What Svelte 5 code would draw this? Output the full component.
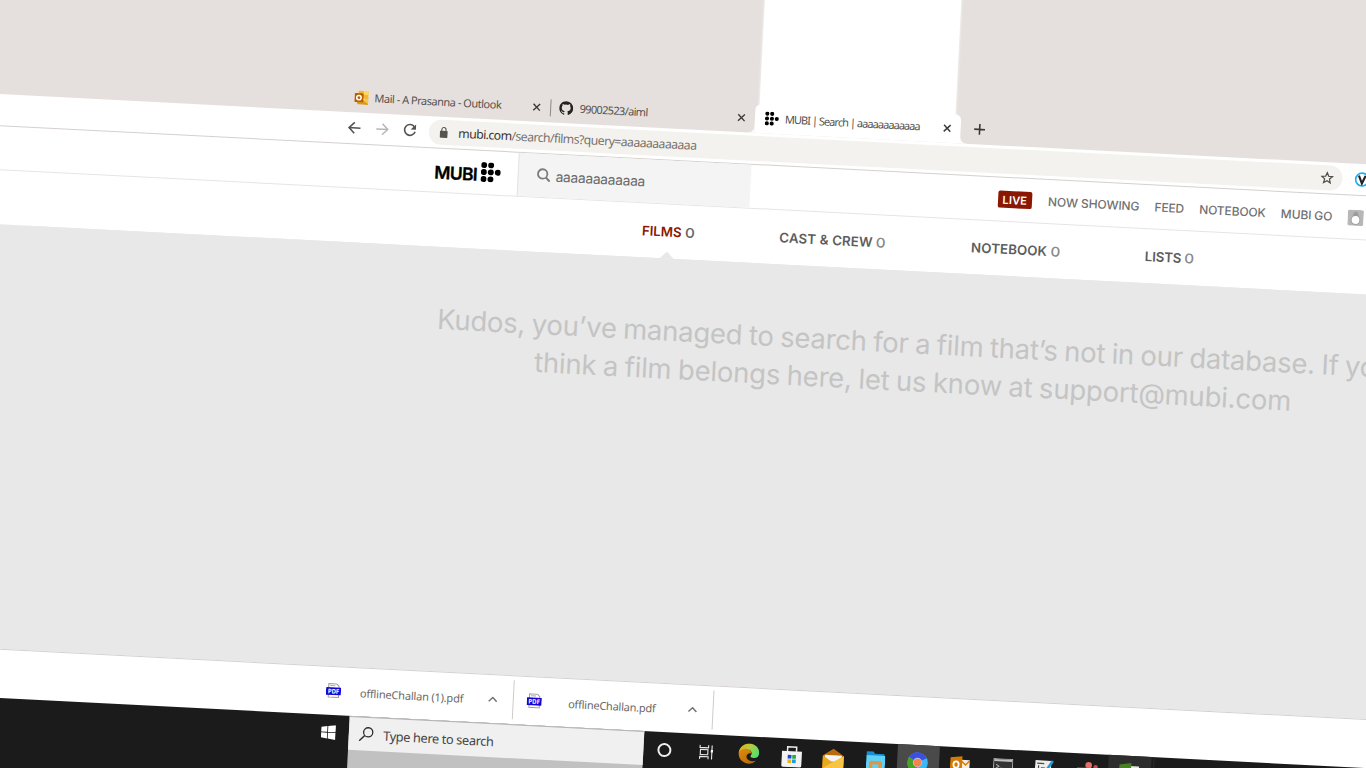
<script>
  // Spreads the letters so that the text takes up the given width.
  function fit(node, width) {
    const natural = parseFloat(getComputedStyle(node).width);
    const count = node.textContent.length;
    node.style.letterSpacing = (width - natural) / count + 'px';
  }

  const tabs = [
    { icon: 'outlook', title: 'Mail - A Prasanna - Outlook', width: 127 },
    { icon: 'github', title: '99002523/aiml', width: 68 },
    { icon: 'mubi', title: 'MUBI | Search | aaaaaaaaaaaa', width: 135, active: true }
  ];
  const links = [
    { label: 'NOW SHOWING', width: 91.5 },
    { label: 'FEED', width: 29.5 },
    { label: 'NOTEBOOK', width: 66.5 },
    { label: 'MUBI GO', width: 51.5 }
  ];
  const sections = [
    { label: 'FILMS', width: 39.5, space: 86, active: true },
    { label: 'CAST & CREW', width: 93.5, space: 86.5 },
    { label: 'NOTEBOOK', width: 76, space: 86 },
    { label: 'LISTS', width: 36.5, space: 0 }
  ];
  const downloads = [
    { name: 'offlineChallan (1).pdf', width: 103.5 },
    { name: 'offlineChallan.pdf', width: 87.5 }
  ];
</script>

{#snippet dots(size)}
  <svg width={size} height={size} viewBox="0 0 20 20">
    {#each [[3, 3], [10, 3], [3, 10], [10, 10], [17, 10], [3, 17], [10, 17]] as [x, y]}
      <circle cx={x} cy={y} r="2.95" fill="#000" />
    {/each}
  </svg>
{/snippet}

<div class="viewport">
  <div class="stage">
    <div class="tabstrip">
      {#each tabs as tab}
        <div class="tab {tab.icon}" class:active={tab.active}>
          {#if tab.icon === 'outlook'}
            <svg width="14" height="14" viewBox="0 0 14 14">
              <path d="M4 0h9.5q.5 0 .5.5V8H4z" fill="#f2b632" />
              <path d="M9 0h5v4H9z" fill="#ffd95c" />
              <path d="M3 6l6 4 5-3.5V13q0 1-1 1H4q-1 0-1-1z" fill="#dc9a17" />
              <path d="M9 10l5-3.5V13z" fill="#f8c64a" />
              <rect x="0" y="2.6" width="9" height="9" rx="1" fill="#b85f00" />
              <circle cx="4.5" cy="7.1" r="2.2" fill="none" stroke="#fff" stroke-width="1.5" />
            </svg>
          {:else if tab.icon === 'github'}
            <svg width="14" height="14" viewBox="0 0 16 16">
              <path fill="#24211f" d="M8 0C3.58 0 0 3.58 0 8c0 3.54 2.29 6.53 5.47 7.59.4.07.55-.17.55-.38 0-.19-.01-.82-.01-1.49-2.01.37-2.53-.49-2.69-.94-.09-.23-.48-.94-.82-1.13-.28-.15-.68-.52-.01-.53.63-.01 1.08.58 1.23.82.72 1.21 1.87.87 2.33.66.07-.52.28-.87.51-1.07-1.78-.2-3.64-.89-3.64-3.95 0-.87.31-1.59.82-2.15-.08-.2-.36-1.02.08-2.12 0 0 .67-.21 2.2.82a7.6 7.6 0 0 1 4 0c1.53-1.04 2.2-.82 2.2-.82.44 1.1.16 1.92.08 2.12.51.56.82 1.27.82 2.15 0 3.07-1.87 3.75-3.65 3.95.29.25.54.73.54 1.48 0 1.07-.01 1.93-.01 2.2 0 .21.15.46.55.38A8.01 8.01 0 0 0 16 8c0-4.42-3.58-8-8-8z" />
            </svg>
          {:else}
            {@render dots(14)}
          {/if}
          <span class="title" use:fit={tab.width}>{tab.title}</span>
          <svg class="close" width="9" height="9" viewBox="0 0 9 9">
            <path d="M1.2 1.2l6.6 6.6M7.8 1.2L1.2 7.8" stroke="#3c3835" stroke-width="1.4" />
          </svg>
        </div>
      {/each}
      <svg class="plus" width="12" height="12" viewBox="0 0 12 12">
        <path d="M6 .6v10.8M.6 6h10.8" stroke="#3c3835" stroke-width="1.6" />
      </svg>
    </div>

    <div class="toolbar">
      <svg width="13" height="13" viewBox="0 0 13 13"><path d="M12.6 6.5H1.2M6.6 1L1.1 6.5 6.6 12" fill="none" stroke="#55514e" stroke-width="1.5" /></svg>
      <svg class="forward" width="13" height="13" viewBox="0 0 13 13"><path d="M.4 6.5h11.4M6.4 1l5.5 5.5L6.4 12" fill="none" stroke="#bab6b3" stroke-width="1.5" /></svg>
      <svg class="reload" width="14" height="14" viewBox="0 0 14 14">
        <path d="M11.6 3.7A5.4 5.4 0 1 0 12.3 8.2" fill="none" stroke="#55514e" stroke-width="1.6" />
        <path d="M13 .9v5.3H7.7z" fill="#55514e" />
      </svg>
      <div class="address">
        <svg width="8" height="11" viewBox="0 0 8 11">
          <rect x="0" y="4" width="8" height="7" rx=".9" fill="#57534f" />
          <path d="M1.9 4.3V2.7a2.1 2.1 0 0 1 4.2 0v1.6" fill="none" stroke="#57534f" stroke-width="1.1" />
        </svg>
        <span class="url" use:fit={238.5}><b>mubi.com</b>/search/films?query=aaaaaaaaaaaa</span>
        <svg class="star" width="13" height="13" viewBox="0 0 13 13">
          <path d="M6.5 1.3l1.5 3.6 3.9.3-3 2.5.95 3.8L6.5 9.4l-3.35 2.1.95-3.8-3-2.5 3.9-.3z" fill="none" stroke="#4f4b48" stroke-width="1.2" />
        </svg>
      </div>
      <svg class="extension" width="15" height="15" viewBox="0 0 15 15">
        <circle cx="7.5" cy="7.5" r="6.4" fill="#fff" stroke="#1cb0ee" stroke-width="1.7" />
        <path d="M4.2 3.6l3.3 7.8 3.3-7.8" fill="none" stroke="#222" stroke-width="2.1" />
      </svg>
    </div>

    <header>
      <span class="brand" use:fit={43}>MUBI</span>
      <span class="mark">{@render dots(20)}</span>
      <div class="search">
        <svg width="14" height="14" viewBox="0 0 14 14">
          <circle cx="5.9" cy="5.9" r="4.7" fill="none" stroke="#7b7b7b" stroke-width="1.8" />
          <path d="M9.3 9.3l3.9 3.9" stroke="#7b7b7b" stroke-width="2" />
        </svg>
        <span use:fit={89.5}>aaaaaaaaaaaa</span>
      </div>
      <div class="live"><span use:fit={24.5}>LIVE</span></div>
      <nav>
        {#each links as link}
          <span use:fit={link.width}>{link.label}</span>
        {/each}
      </nav>
      <svg class="avatar" width="16" height="16" viewBox="0 0 16 16">
        <rect width="16" height="16" rx="2" fill="#b7b7b7" />
        <path d="M8 2c2 0 2.3 1.8 2.8 3.5.6 1.7 2 2.7 2 5A4.5 4.5 0 0 1 8 15a4.5 4.5 0 0 1-4.8-4.5c0-2.3 1.4-3.3 2-5C5.7 3.8 6 2 8 2z" fill="#9c9c9c" />
        <ellipse cx="8" cy="10.2" rx="3.9" ry="4" fill="#fff" />
      </svg>
    </header>

    <div class="sections">
      {#each sections as s}
        <div class="section" class:chosen={s.active} style:margin-right="{s.space}px">
          <span use:fit={s.width}>{s.label}</span><i>0</i>
        </div>
      {/each}
    </div>

    <main>
      <p><span use:fit={956}>Kudos, you’ve managed to search for a film that’s not in our database. If you</span></p>
      <p><span use:fit={758}>think a film belongs here, let us know at support@mubi.com</span></p>
    </main>

    <div class="shelf">
      {#each downloads as d}
        <div class="download">
          <svg width="15" height="15" viewBox="0 0 15 15">
            <path d="M2.5 5V.7h8l2.3 2.3V5M2.5 11v3.3h10.3V11" fill="#fff" stroke="#999" stroke-width="1" />
            <path d="M4 2.6h5" stroke="#aaa" />
            <rect x="0" y="4.3" width="15" height="7.7" rx=".5" fill="#1703d2" />
            <text x="7.5" y="10.5" text-anchor="middle" textLength="11.5" lengthAdjust="spacingAndGlyphs" font-size="6.4">PDF</text>
          </svg>
          <div class="file"><span use:fit={d.width}>{d.name}</span></div>
          <svg class="chevron" width="10" height="6" viewBox="0 0 10 6"><path d="M1 5.3l4-4 4 4" fill="none" stroke="#77726f" stroke-width="1.5" /></svg>
        </div>
      {/each}
    </div>

    <div class="taskbar">
      <div class="start">
        <svg width="15" height="15" viewBox="0 0 15 15">
          <path d="M.3 2.2l6-.9v5.8h-6zM7.1 1.2L14.7.1v7H7.1zM.3 7.9h6v5.8l-6-.9zM7.1 7.9h7.6v7l-7.6-1.1z" fill="#fff" />
        </svg>
      </div>
      <div class="find">
        <div class="field">
          <svg width="15" height="15" viewBox="0 0 15 15">
            <circle cx="9.3" cy="5.5" r="4.6" fill="none" stroke="#2a2a2a" stroke-width="1.3" />
            <path d="M6 8.9L.7 14.3" stroke="#2a2a2a" stroke-width="1.4" />
          </svg>
          <span use:fit={110.5}>Type here to search</span>
        </div>
      </div>
      <div class="app">
        <svg width="16" height="16" viewBox="0 0 16 16"><circle cx="8" cy="8" r="6" fill="none" stroke="#eee" stroke-width="2" /></svg>
      </div>
      <div class="app">
        <svg width="16" height="16" viewBox="0 0 16 16" fill="none" stroke="#e8e8e8" stroke-width="1.1">
          <path d="M1.5 1v2.5h8.500V1M1.5 15v-2.5h8.500V15" />
          <rect x="2" y="5.5" width="7.5" height="5" />
          <path d="M13.5 1v14" />
          <rect x="12.4" y="5.5" width="2.2" height="2.5" fill="#fff" stroke="none" />
        </svg>
      </div>
      <div class="app">
        <svg width="21" height="21" viewBox="0 0 21 21">
          <defs>
            <linearGradient id="edge-top" x1="0" y1="0" x2="1" y2=".5"><stop offset="0" stop-color="#e6a61c" /><stop offset=".5" stop-color="#b9cb3d" /><stop offset="1" stop-color="#56df6d" /></linearGradient>
            <linearGradient id="edge-low" x1="0" y1="0" x2=".6" y2="1"><stop offset="0" stop-color="#e58c0d" /><stop offset="1" stop-color="#b96e0b" /></linearGradient>
          </defs>
          <path d="M.2 10.5C.2 6 4 3.5 8 4.5c3 .8 5 3 4.5 5.5-1.5-1-4.2.5-4.200 3.200 0 3.500 5 5.300 9.700 3.800A10.300 10.300 0 0 1 .2 10.500z" fill="url(#edge-low)" />
          <path d="M.3 9.500C1.100 4 5.300.2 10.600.2c6 0 10.300 4.300 10.200 9 0 3.300-2.300 5.200-5 5.200-2 0-3.500-.7-3.500-1.600 0-.7 1-1.100 1-2.800 0-2.400-2.400-4.400-5.500-4.400C4.500 5.600 1.600 7 .3 9.500z" fill="url(#edge-top)" />
        </svg>
      </div>
      <div class="app">
        <svg width="21" height="22" viewBox="0 0 21 22">
          <path d="M6 6V1.300h9V6" fill="none" stroke="#eee" stroke-width="1.500" />
          <path d="M.5 5.600h20V20q0 1.500-1.500 1.500H2Q.5 21.500.5 20z" fill="#f2f2f2" />
          <path d="M6.500 9.300h3.700V13H6.500z" fill="#1747d4" /><path d="M11 9.300h3.700V13H11z" fill="#2bab43" />
          <path d="M6.500 13.800h3.700v3.700H6.500z" fill="#eeb11a" /><path d="M11 13.800h3.700v3.700H11z" fill="#179de0" />
        </svg>
      </div>
      <div class="app">
        <svg width="22" height="22" viewBox="0 0 22 22">
          <path d="M.5 8L11 1l10.500 7v13H.5z" fill="#b96a0c" />
          <path d="M2.500 7.500h17V14h-17z" fill="#f4f4f4" />
          <path d="M.5 8L11 15l10.500-7v13H.5z" fill="#e9a91e" />
          <path d="M.5 21L11 14.200 21.500 8v13z" fill="#f7c443" />
        </svg>
      </div>
      <div class="app">
        <svg width="19" height="19" viewBox="0 0 19 19">
          <path d="M0 .8h7l1.500 2H18V6H0z" fill="#1790d2" />
          <path d="M0 4.500h19V18H0z" fill="#5fd0f7" />
          <path d="M3 18v-6q0-2 2-2h9q2 0 2 2v6h-3.500v-4.500h-6V18z" fill="#dc9746" />
        </svg>
      </div>
      <div class="app tile">
        <svg width="21" height="21" viewBox="0 0 21 21">
          <circle cx="10.500" cy="10.500" r="10.200" fill="#3bb9f3" />
          <path d="M10.500 10.500L1.600 5.400A10.200 10.200 0 0 1 19.500 5.600z" fill="#3e4fdc" />
          <path d="M10.500 10.500L1.600 5.400a10.200 10.200 0 0 0 8 15.300z" fill="#4ba026" />
          <circle cx="10.500" cy="10.500" r="4.700" fill="#b9c7ec" />
          <circle cx="10.500" cy="10.500" r="3.900" fill="#f9814a" />
        </svg>
      </div>
      <div class="app">
        <svg width="20" height="20" viewBox="0 0 20 20">
          <path d="M11 4.500h8.500V15H11z" fill="#f5efe2" />
          <path d="M11.500 6l4 3.500 4-4.500" fill="none" stroke="#d67d08" stroke-width="1.500" />
          <path d="M0 2.500L12 .8v18L0 17z" fill="#d47b06" />
          <ellipse cx="6" cy="9.500" rx="2.600" ry="3.200" fill="none" stroke="#fff" stroke-width="1.800" />
        </svg>
      </div>
      <div class="app">
        <svg width="20" height="17" viewBox="0 0 20 17">
          <rect x=".5" y=".5" width="19" height="16" fill="#333" stroke="#a8a8a8" />
          <path d="M1 2h18" stroke="#c0c0c0" stroke-width="2" />
          <path d="M3 6l3 2-3 2M7 10h5" fill="none" stroke="#aaa" />
        </svg>
      </div>
      <div class="app">
        <svg width="19" height="20" viewBox="0 0 19 20">
          <path d="M0 1h16v18H0z" fill="#ededea" />
          <path d="M2 4h7M3.500 6v7M6.500 13V8.500l3 0V13" fill="none" stroke="#4a4a4a" stroke-width="1.200" />
          <path d="M17.500 1L10 13" stroke="#239bdb" stroke-width="2.600" />
        </svg>
      </div>
      <div class="app">
        <svg width="21" height="20" viewBox="0 0 21 20">
          <circle cx="11.500" cy="3.500" r="3.300" fill="#e46f6b" /><circle cx="18.500" cy="5" r="2.200" fill="#c94e4e" />
          <path d="M0 6h12v10H0z" fill="#b83d40" /><path d="M8 8h13v9H8z" fill="#df6664" />
          <path d="M3 8.500h6M6 8.500V14" stroke="#fff" stroke-width="1.400" />
        </svg>
      </div>
      <div class="app tile dim">
        <svg width="20" height="20" viewBox="0 0 20 20">
          <path d="M10 3h10v14H10z" fill="#dfead8" /><path d="M0 2l12-2v20L0 18z" fill="#477f23" />
          <path d="M12 6h5" stroke="#477f23" stroke-width="1.500" />
        </svg>
      </div>
      <div class="edgeline"></div>
    </div>
  </div>
</div>

<style>
  :global(body) { overflow: hidden; background: #fff; }
  .viewport { width: 1366px; height: 768px; overflow: hidden; background: #e5e0dd; font-family: 'Noto Sans', 'Open Sans', sans-serif; }
  .stage { width: 1440px; margin-top: -80px; transform: rotate(2.94deg); transform-origin: 0 80px; background: #fff; float: left; }
  .stage svg { display: block; flex: none; }
  span { display: inline-block; white-space: nowrap; flex: none; }

  .tabstrip { height: 174px; box-sizing: border-box; background: #e5e0dd; display: flex; align-items: flex-end; padding-left: 349px; }
  .tab { position: relative; box-sizing: border-box; width: 205.5px; height: 29px; padding: 0 9px 1px 9.5px; display: flex; align-items: center; gap: 6.5px; font-size: 11px; color: #54504d; }
  .title { padding-bottom: 2px; }
  .close { margin-left: auto; }
  .tab.outlook::after { content: ''; position: absolute; right: -1px; top: 6px; width: 1px; height: 17px; background: #8d8885; }
  .tab.active { background: #fff; border-radius: 6px 6px 0 0; }
  .tab.active::before { content: ''; position: absolute; left: 4px; right: 5.5px; bottom: 23px; height: 160px; background: #fff; box-shadow: 0 0 3px #fff; }
  .tab.active::after { content: ''; position: absolute; left: -6px; right: -6px; bottom: 0; height: 6px; background: radial-gradient(circle at 0 0, transparent 5.5px, #fff 6px) left / 6px 6px no-repeat, radial-gradient(circle at 100% 0, transparent 5.5px, #fff 6px) right / 6px 6px no-repeat; }
  .tab > * { z-index: 1; }
  .plus { margin: 0 0 9px 13.5px; }

  .toolbar { height: 31.6px; box-sizing: border-box; padding-left: 354px; border-bottom: 1px solid #d4d0ce; display: flex; align-items: center; }
  .forward { margin-left: 15px; }
  .reload { margin-left: 13.500px; }
  .address { box-sizing: border-box; margin-left: 12.500px; width: 914.500px; height: 24.700px; border-radius: 13px; background: #f3f2ee; display: flex; align-items: center; padding: 0 8.500px 0 11px; font-size: 12.300px; color: #77726e; }
  .url { margin-left: 10.500px; }
  .url b { font-weight: 400; color: #37332f; }
  .star { margin-left: auto; }
  .extension { margin-left: 12px; }

  header { height: 44.600px; box-sizing: border-box; border-bottom: 1px solid #e5e5e5; padding-left: 442.500px; display: flex; align-items: center; font-family: Inter, sans-serif; }
  .brand { font-size: 17.500px; font-weight: 600; color: #000; padding-top: 4.500px; -webkit-text-stroke: .3px #000; }
  .mark { margin: -1px 0 0 3px; }
  .search { align-self: stretch; box-sizing: border-box; margin-left: 17.500px; width: 233px; border-left: 1px solid #e3e3e3; background: #f4f4f4; padding-left: 18px; display: flex; align-items: center; gap: 5px; font-size: 13.800px; color: #6b6b6b; }
  .search span { padding-top: 2px; }
  .live { margin: .6px 0 0 247.500px; width: 34.500px; height: 17px; border-radius: 2px; background: #8b1703; color: #fff; font-size: 11px; font-weight: 600; display: flex; align-items: center; justify-content: center; }
  nav { display: flex; gap: 15.200px; margin: .8px 0 0 16px; font-size: 12px; font-weight: 500; color: #707070; }
  .avatar { margin: .6px 0 0 15px; }

  .sections { height: 53.900px; display: flex; padding-left: 653px; font: 600 13.300px Inter, sans-serif; color: #5d5d5d; }
  .section { position: relative; display: flex; align-items: center; gap: 3px; padding-top: .6px; }
  .section i { font-style: normal; font-weight: 500; color: #8a8a8a; width: 9px; transform: scaleX(1.15); transform-origin: 0 50%; }
  .chosen { color: #8b1703; }
  .chosen i { color: #666; }
  .chosen::after { content: ''; position: absolute; left: 50%; bottom: 0; margin-left: -7px; border: 7px solid transparent; border-top: 0; border-bottom: 7px solid #e8e8e8; }

  main { height: 423.600px; box-sizing: border-box; padding: 52.600px 0 0 431px; width: 1431px; background: #e8e8e8; box-shadow: 40px 0 #e8e8e8; font: 400 27.500px/38.500px Inter, sans-serif; word-spacing: -1px; color: #c4c4c4; text-align: center; }
  main p { margin: 0; width: 1000px; height: 38.500px; }

  .shelf { height: 49.200px; box-sizing: border-box; border-top: 1px solid #d5d1cf; position: relative; background: #fff; display: flex; align-items: center; padding-left: 348px; font-size: 11px; color: #6b6764; }
  .download { box-sizing: border-box; width: 200.500px; height: 39px; border-right: 1px solid #cfcbc9; display: flex; align-items: center; padding-left: 13px; }
  .download > svg:first-child { margin-top: -1px; }
  .download text { font-weight: 700; fill: #fff; }
  .file { width: 141.500px; text-align: center; }
  .file span { padding-top: 1px; }
  .chevron { margin-left: 5px; }

  .taskbar { height: 150px; background: #1b1b1b; display: flex; padding-left: 345.500px; position: relative; }
  .start { width: 40.500px; height: 36px; display: flex; align-items: center; justify-content: center; }
  .find { width: 295px; background: #c1c1c1; }
  .field { height: 34px; box-sizing: border-box; border-top: 1px solid #b2b2b2; background: #f0f0f0; display: flex; align-items: center; padding-left: 10px; gap: 9.500px; font-size: 12.800px; color: #444; }
  .field span { padding-top: 2px; }
  .app { width: 42.300px; height: 36px; display: flex; align-items: center; justify-content: center; }
  .tile { height: 100px; align-items: flex-start; background: #4a4a4a; }
  .tile svg { margin-top: 7.500px; }
  .tile.dim { background: #2d2d2d; }
  .edgeline { width: 1px; height: 100px; margin-left: 2px; background: #2d2d2d; }
</style>
